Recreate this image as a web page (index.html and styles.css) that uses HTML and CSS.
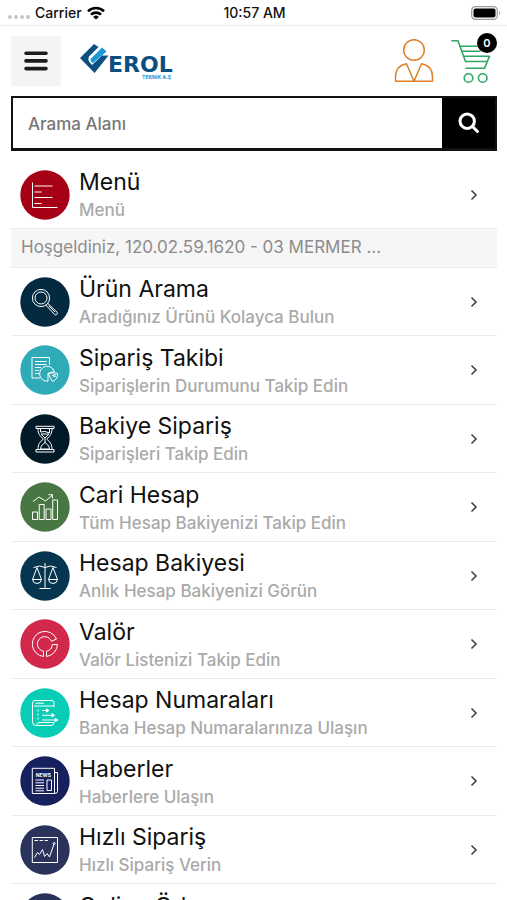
FILE: index.html
```
<!DOCTYPE html>
<html lang="tr">
<head>
<meta charset="utf-8">
<meta name="viewport" content="width=device-width, initial-scale=1">
<title>Erol Teknik</title>
<link rel="stylesheet" href="styles.css">
</head>
<body>
<div class="status">
  <div class="status-left">
    <svg width="22" height="6" viewBox="0 0 22 6" fill="#c4c4c4" aria-hidden="true"><circle cx="2" cy="3" r="2"/><circle cx="8" cy="3" r="2"/><circle cx="14" cy="3" r="2"/><circle cx="20" cy="3" r="2"/></svg>
    <span>Carrier</span>
    <svg width="18" height="14" viewBox="0 0 18 14" fill="none" stroke="#000" stroke-width="2.6" aria-hidden="true"><path d="M1 5.2a11.5 11.5 0 0 1 16 0M4 8.6a7.2 7.2 0 0 1 10 0"/><path d="M9 13.6l-2.8-2.7a4 4 0 0 1 5.6 0z" fill="#000" stroke="none"/></svg>
  </div>
  <span>10:57 AM</span>
  <div class="status-right">
    <svg width="30" height="14" viewBox="0 0 30 14" aria-hidden="true"><rect x=".7" y=".7" width="25.6" height="12.6" rx="3.6" fill="#fff" stroke="#999" stroke-width="1.2"/><rect x="2.5" y="2.4" width="22" height="9.2" rx="2" /><path d="M28 4.6q1.8 2.4 0 4.8z" fill="#888"/></svg>
  </div>
</div>

<header class="top">
  <button class="menu-btn" aria-label="Menü">
    <svg width="24" height="20" viewBox="0 0 24 20" stroke="#1c1c1c" stroke-width="3.6" stroke-linecap="round" aria-hidden="true"><path d="M2 2.2h20M2 9.9h20M2 17.6h20"/></svg>
  </button>
  <a class="logo" href="#" aria-label="Erol Teknik A.Ş.">
    <svg width="96" height="38" viewBox="0 0 96 38" aria-hidden="true">
      <path d="M0 16L14 2 18.500 5 9 14.500Q7.500 17 9 19.500L12 23 22 13.500H28.500L14.500 31z" fill="#0b4f80"/>
      <path d="M11 16.500L22 5.500 26.500 9.500 13 21Q9.500 19.500 11 16.500z" fill="#1c97d8"/>
      <text class="logo-name" x="28" y="30">EROL</text>
      <text class="logo-sub" x="62" y="37">TEKNİK A.Ş</text>
    </svg>
  </a>
  <a class="user" href="#" aria-label="Hesabım">
    <svg width="40" height="44" viewBox="0 0 40 44" fill="none" stroke="#e08128" stroke-width="1.500" stroke-linejoin="round" aria-hidden="true"><circle cx="20" cy="11" r="10.300"/><path d="M1.500 42.300V38C1.500 30.500 6 26 12.500 24.800L20 42.300 27.500 24.800C34 26 38.500 30.500 38.500 38V42.300z"/></svg>
  </a>
  <a class="cart" href="#" aria-label="Sepet">
    <svg width="40" height="45" viewBox="0 0 40 45" fill="none" stroke="#2fa566" stroke-width="1.600" stroke-linecap="round" stroke-linejoin="round" aria-hidden="true"><path d="M1 1.700h6L14.500 22.500H36M8.700 7.300H26M10.700 12.300H29M12.500 17.300H38.500L33.500 29.300H15"/><circle cx="17.500" cy="39" r="4.300"/><circle cx="31.700" cy="39" r="4.300"/></svg>
    <span class="badge">0</span>
  </a>
</header>

<form class="search">
  <input type="text" placeholder="Arama Alanı" aria-label="Arama Alanı">
  <button type="button" aria-label="Ara">
    <svg width="22" height="22" viewBox="0 0 22 22" fill="none" stroke="#fff" stroke-width="3" stroke-linecap="round" aria-hidden="true"><circle cx="9.200" cy="9.200" r="7.200"/><path d="M14.500 14.500l5 5"/></svg>
  </button>
</form>

<a class="row head" href="#">
  <svg class="icon" viewBox="0 0 50 50" aria-hidden="true"><circle cx="25" cy="25" r="24.700" fill="#a50016"/><path d="M12.500 12.500V37.500H37.500M14.500 16H32.500M14.500 22H21.500M14.500 27.500H32.500M14.500 33.500H21.500"/></svg>
  <span class="text"><span class="title">Menü</span><span class="sub">Menü</span></span>
  <svg class="chev" viewBox="0 0 8 12" aria-hidden="true"><path d="M1.500 1.500L6 6 1.500 10.500"/></svg>
</a>
<p class="welcome">Hoşgeldiniz, 120.02.59.1620 - 03 MERMER ...</p>

<nav class="list">
  <a class="row" href="#">
    <svg class="icon" viewBox="0 0 50 50" aria-hidden="true"><circle cx="25" cy="25" r="24.700" fill="#032a40"/><circle cx="21" cy="21" r="8.600"/><circle cx="21" cy="21" r="6"/><path d="M26 28.200l1.800-1.800 9.300 8.800q.8 1.200-.2 2.200t-2.200.2zM28.800 28.800l6.300 6.300"/></svg>
    <span class="text"><span class="title">Ürün Arama</span><span class="sub">Aradığınız Ürünü Kolayca Bulun</span></span>
    <svg class="chev" viewBox="0 0 8 12" aria-hidden="true"><path d="M1.500 1.500L6 6 1.500 10.500"/></svg>
  </a>
  <a class="row" href="#">
    <svg class="icon" viewBox="0 0 50 50" aria-hidden="true"><circle cx="25" cy="25" r="24.700" fill="#2fabb8"/><path d="M20 33H12V12.500H29.500V20M15 16.500H26.500M15 19.500H26.500M15 22.500H21M15 25.500H19M15 28.500H19"/><path d="M28 36.200A7.500 7.500 0 1 1 34.300 26.500L28 28.500z"/><path d="M28 28.500L33 27.700 37.500 28.500A8 8 0 0 1 32.500 36.500zM32.500 30.500L35 29.500V32z"/></svg>
    <span class="text"><span class="title">Sipariş Takibi</span><span class="sub">Siparişlerin Durumunu Takip Edin</span></span>
    <svg class="chev" viewBox="0 0 8 12" aria-hidden="true"><path d="M1.500 1.500L6 6 1.500 10.500"/></svg>
  </a>
  <a class="row" href="#">
    <svg class="icon" viewBox="0 0 50 50" aria-hidden="true"><circle cx="25" cy="25" r="24.700" fill="#021a28"/><path d="M16 12.300H34V14.500H16zM16 35.500H34V38H16zM18 14.500C18 20 20 22 23.300 25 20 28 18 30 18 35.500M32 14.500C32 20 30 22 26.700 25 30 28 32 30 32 35.500M20.500 15V18Q25 16.500 29.500 19V15M21 20L25 24 29 20zM25 24V29M20.500 35C21 31 23 30.500 25 28.500 27 30.500 29 31 29.500 35z"/></svg>
    <span class="text"><span class="title">Bakiye Sipariş</span><span class="sub">Siparişleri Takip Edin</span></span>
    <svg class="chev" viewBox="0 0 8 12" aria-hidden="true"><path d="M1.500 1.500L6 6 1.500 10.500"/></svg>
  </a>
  <a class="row" href="#">
    <svg class="icon" viewBox="0 0 50 50" aria-hidden="true"><circle cx="25" cy="25" r="24.700" fill="#487743"/><path d="M12.500 30H17.500V37.500H12.500zM19.200 22.500H24.200V37.500H19.200zM26 27H31V37.500H26zM32.700 18H37.500V37.500H32.700zM13 19.500L19 15 25.500 19 32 13.500M28.500 12.700H32.500V16.500"/></svg>
    <span class="text"><span class="title">Cari Hesap</span><span class="sub">Tüm Hesap Bakiyenizi Takip Edin</span></span>
    <svg class="chev" viewBox="0 0 8 12" aria-hidden="true"><path d="M1.500 1.500L6 6 1.500 10.500"/></svg>
  </a>
  <a class="row" href="#">
    <svg class="icon" viewBox="0 0 50 50" aria-hidden="true"><circle cx="25" cy="25" r="24.700" fill="#06364f"/><path d="M25 12V37M19.500 37.500H30.500M13.500 16.500Q20 13.500 25 16.500 30 13.500 36.500 16.500M17 16.500L12.500 28.500H21.500zM33 16.500L28.500 28.500H37.500zM12.500 28.500Q13 32.500 17 32.500T21.500 28.500M28.500 28.500Q29 32.500 33 32.500T37.500 28.500"/></svg>
    <span class="text"><span class="title">Hesap Bakiyesi</span><span class="sub">Anlık Hesap Bakiyenizi Görün</span></span>
    <svg class="chev" viewBox="0 0 8 12" aria-hidden="true"><path d="M1.500 1.500L6 6 1.500 10.500"/></svg>
  </a>
  <a class="row" href="#">
    <svg class="icon" viewBox="0 0 50 50" aria-hidden="true"><circle cx="25" cy="25" r="24.700" fill="#d2284b"/><path d="M23.500 37.500A12.600 12.600 0 1 1 36.500 20L31.500 22.300A7.300 7.300 0 1 0 23.500 32.200zM26.500 37.500A12.600 12.600 0 0 0 37.500 25.500H32.300A7.300 7.300 0 0 1 26.500 32.200z"/></svg>
    <span class="text"><span class="title">Valör</span><span class="sub">Valör Listenizi Takip Edin</span></span>
    <svg class="chev" viewBox="0 0 8 12" aria-hidden="true"><path d="M1.500 1.500L6 6 1.500 10.500"/></svg>
  </a>
  <a class="row" href="#">
    <svg class="icon" viewBox="0 0 50 50" aria-hidden="true"><circle cx="25" cy="25" r="24.700" fill="#08cdb6"/><path d="M34 19V14.500Q34 12.500 32 12.500H15Q12.500 12.500 12.500 15V34Q12.500 37.500 16 37.500H31Q34 37.500 34 34.500M34 34.500H18.500Q18.500 36.500 16.500 36M14 18H34M15.500 15.200H24"/><path d="M18 21.500V32" stroke-dasharray="2 2"/><path d="M22 22.500H27M22 27.300H33M22 32H36"/><path d="M26.500 20.800L29 22.500 26.500 24.200zM32 25.600L34.500 27.300 32 29zM35 30.300L38 32 35 33.700z" fill="#fff"/></svg>
    <span class="text"><span class="title">Hesap Numaraları</span><span class="sub">Banka Hesap Numaralarınıza Ulaşın</span></span>
    <svg class="chev" viewBox="0 0 8 12" aria-hidden="true"><path d="M1.500 1.500L6 6 1.500 10.500"/></svg>
  </a>
  <a class="row" href="#">
    <svg class="icon" viewBox="0 0 50 50" aria-hidden="true"><circle cx="25" cy="25" r="24.700" fill="#15205c"/><path d="M12.300 12.300H34.500V37.500H12.300zM34.500 16.500H37.500V35.500Q37.500 37.500 34.500 37.500M15.500 24H24M15.500 26.800H24M15.500 29.500H24M15.500 32.200H24M15.500 34.800H24M27 24H31.500V34.500H27z"/><text class="news" x="23.400" y="20.500">NEWS</text></svg>
    <span class="text"><span class="title">Haberler</span><span class="sub">Haberlere Ulaşın</span></span>
    <svg class="chev" viewBox="0 0 8 12" aria-hidden="true"><path d="M1.500 1.500L6 6 1.500 10.500"/></svg>
  </a>
  <a class="row" href="#">
    <svg class="icon" viewBox="0 0 50 50" aria-hidden="true"><circle cx="25" cy="25" r="24.700" fill="#29335b"/><path d="M12.300 12.500H37.500V37.500H12.300z"/><path d="M14.500 15.500H29.500" stroke-dasharray="3.500 1.500"/><path d="M14.500 32.500L17.500 27.500 19.500 29.500 22.500 24.500 24.500 31.500 27 28.500 29.500 32 34 19"/><circle cx="34.200" cy="18.500" r="1"/></svg>
    <span class="text"><span class="title">Hızlı Sipariş</span><span class="sub">Hızlı Sipariş Verin</span></span>
    <svg class="chev" viewBox="0 0 8 12" aria-hidden="true"><path d="M1.500 1.500L6 6 1.500 10.500"/></svg>
  </a>
  <a class="row" href="#">
    <svg class="icon" viewBox="0 0 50 50" aria-hidden="true"><circle cx="25" cy="25" r="24.700" fill="#29335b"/><path d="M12.500 16H37.500V34H12.500zM12.500 21H37.500"/></svg>
    <span class="text"><span class="title">Online Ödeme</span></span>
    <svg class="chev" viewBox="0 0 8 12" aria-hidden="true"><path d="M1.500 1.500L6 6 1.500 10.500"/></svg>
  </a>
</nav>
</body>
</html>
```

FILE: styles.css
```
* {
  box-sizing: border-box;
}

body {
  margin: 0;
  height: 100vh;
  overflow: hidden;
  background: #fff;
  color: #111;
  font-family: Inter, "Liberation Sans", sans-serif;
}

a {
  color: inherit;
  text-decoration: none;
}

svg {
  display: block;
  flex: none;
}

.status {
  display: grid;
  grid-template-columns: 1fr auto 1fr;
  align-items: center;
  height: 26px;
  padding: 0 6px 0 8px;
  border-bottom: 1px solid #eee;
  font-size: 14px;
  font-weight: 500;
}

.status-left {
  display: flex;
  align-items: center;
  gap: 5px;
}

.status-left svg:first-child {
  margin-top: 8px;
}

.status-right {
  display: flex;
  justify-content: flex-end;
}

.top {
  display: flex;
  align-items: center;
  height: 70px;
  padding: 0 16px 0 11px;
}

.menu-btn {
  display: grid;
  place-items: center;
  width: 50px;
  height: 50px;
  padding: 0;
  border: 0;
  background: #f4f4f4;
}

.logo {
  margin: 0 auto 0 19px;
}

.logo-name {
  fill: #0b4f80;
  font-family: "DejaVu Sans", sans-serif;
  font-size: 22px;
  font-weight: 700;
}

.logo-sub {
  fill: #2b9fdc;
  font-size: 5px;
  font-weight: 800;
}

.cart {
  position: relative;
  margin-left: 17px;
}

.badge {
  position: absolute;
  top: -6px;
  right: -6px;
  width: 20px;
  height: 20px;
  border-radius: 50%;
  background: #000;
  color: #fff;
  font-size: 11px;
  font-weight: 600;
  line-height: 20px;
  text-align: center;
}

.search {
  display: flex;
  height: 55px;
  margin: 0 10px 0 11px;
  border: 2px solid #111;
  border-bottom-width: 3px;
}

.search input {
  flex: 1;
  min-width: 0;
  padding: 2px 15px 0;
  border: 0;
  outline: 0;
  background: #fff;
  font: 500 17px Inter, "Liberation Sans", sans-serif;
}

.search input::placeholder {
  color: #777;
  opacity: 1;
}

.search button {
  display: grid;
  place-items: center;
  width: 53px;
  padding: 0;
  border: 0;
  background: #000;
}

.row {
  display: flex;
  align-items: center;
  height: 68px;
  margin: 0 10px 0 11px;
  padding: 0 19px 0 9px;
  border-bottom: 1px solid #ebebeb;
}

.row:nth-child(even) {
  height: 69px;
}

.row.head {
  height: 67px;
  margin-top: 10px;
  border-bottom: 0;
}

.icon {
  width: 50px;
  height: 50px;
  fill: none;
  stroke: #fff;
  stroke-width: 1;
  stroke-linejoin: round;
}

.icon > circle:first-child {
  stroke: none;
}

.news {
  fill: #fff;
  stroke: none;
  font-size: 5px;
  font-weight: 700;
  text-anchor: middle;
}

.text {
  display: flex;
  flex: 1;
  flex-direction: column;
  min-width: 0;
  min-height: 57px;
  padding-left: 9px;
}

.title {
  font-size: 23px;
  line-height: 32px;
}

.sub {
  color: #aaa;
  font-size: 17px;
  font-weight: 500;
  line-height: 25px;
}

.chev {
  width: 8px;
  height: 12px;
  fill: none;
  stroke: #444;
  stroke-width: 1.6;
}

.welcome {
  height: 40px;
  margin: 0 10px 0 11px;
  padding: 0 10px;
  border: solid #ebebeb;
  border-width: 1px 0;
  background: #f6f6f6;
  color: #8c8c8c;
  font-size: 17px;
  line-height: 36px;
}
```
